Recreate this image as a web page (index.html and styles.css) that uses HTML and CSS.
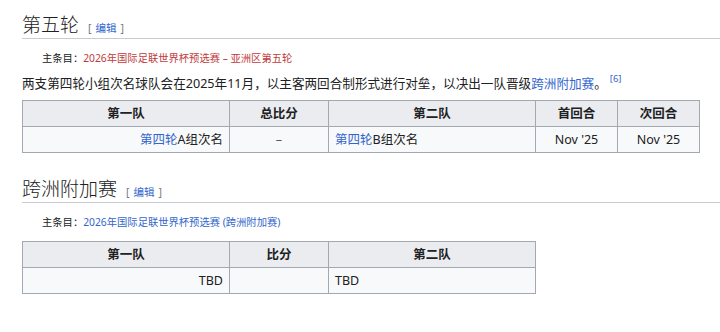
FILE: index.html
```html
<!DOCTYPE html>
<html lang="zh">
<head>
<meta charset="utf-8">
<title>第五轮</title>
<link rel="stylesheet" href="styles.css">
</head>
<body>
<main class="content">
  <h2 class="section-heading first">
    <span class="headline">第五轮</span>
    <span class="editsection"><span class="bracket">[</span><a href="#">编辑</a><span class="bracket">]</span></span>
  </h2>
  <div class="hatnote">主条目：<a href="#" class="new">2026年国际足联世界杯预选赛 – 亚洲区第五轮</a></div>
  <p class="para">两支第四轮小组次名球队会在2025年11月，以主客两回合制形式进行对垒，以决出一队晋级<a href="#">跨洲附加赛</a>。<sup class="ref"><a href="#">[6]</a></sup></p>
  <table class="wikitable wide">
    <colgroup>
      <col class="c-team"><col class="c-agg"><col class="c-team"><col class="c-leg"><col class="c-leg">
    </colgroup>
    <thead>
      <tr><th>第一队</th><th>总比分</th><th>第二队</th><th>首回合</th><th>次回合</th></tr>
    </thead>
    <tbody>
      <tr>
        <td class="right"><a href="#">第四轮</a>A组次名</td>
        <td class="center dash">–</td>
        <td class="left"><a href="#">第四轮</a>B组次名</td>
        <td class="center">Nov '25</td>
        <td class="center">Nov '25</td>
      </tr>
    </tbody>
  </table>

  <h2 class="section-heading second">
    <span class="headline">跨洲附加赛</span>
    <span class="editsection"><span class="bracket">[</span><a href="#">编辑</a><span class="bracket">]</span></span>
  </h2>
  <div class="hatnote">主条目：<a href="#">2026年国际足联世界杯预选赛 (跨洲附加赛)</a></div>
  <table class="wikitable narrow">
    <colgroup>
      <col class="c-team"><col class="c-agg"><col class="c-team">
    </colgroup>
    <thead>
      <tr><th>第一队</th><th>比分</th><th>第二队</th></tr>
    </thead>
    <tbody>
      <tr>
        <td class="right">TBD</td>
        <td class="center"></td>
        <td class="left">TBD</td>
      </tr>
    </tbody>
  </table>
</main>
</body>
</html>
```
FILE: styles.css
```css
html, body {
  margin: 0;
  padding: 0;
  background: #ffffff;
}

body {
  font-family: "Noto Sans", "Noto Sans CJK SC", sans-serif;
  color: #202122;
  overflow: hidden;
}

.content {
  padding-left: 22px;
}

a {
  color: #3366cc;
  text-decoration: none;
}

a.new {
  color: #c03b3b;
}

/* section headings with a thin rule underneath */
.section-heading {
  display: flex;
  align-items: baseline;
  height: 25px;
  margin: 0;
  padding: 0 0 2px 0;
  border-bottom: 1px solid #c8ccd1;
  font-weight: normal;
  white-space: nowrap;
}

.section-heading.first {
  margin-top: 11px;
}

.section-heading.second {
  margin-top: 22px;
}

.headline {
  font-family: "Noto Sans CJK SC", sans-serif;
  font-size: 19px;
  line-height: 25px;
  font-weight: 300;
  color: #202122;
}

.editsection {
  font-family: "Noto Sans", "Noto Sans CJK SC", sans-serif;
  font-size: 10.5px;
  line-height: 12px;
  margin-left: 9px;
}

.editsection .bracket {
  color: #72777d;
}

.editsection .bracket:first-child {
  margin-right: 4px;
}

.editsection .bracket:last-child {
  margin-left: 4px;
}

/* "main article" note */
.hatnote {
  padding-left: 20px;
  margin-top: 11px;
  font-size: 10.3px;
  line-height: 16px;
  color: #202122;
}

.para {
  margin: 8px 0 0 0;
  font-size: 12.6px;
  line-height: 20px;
}

.ref {
  font-size: 9.5px;
  line-height: 1;
  vertical-align: 6px;
  margin-left: 3px;
}

/* data tables */
.wikitable {
  border-collapse: collapse;
  table-layout: fixed;
  background: #f8f9fa;
  border: 1px solid #a2a9b1;
  font-size: 12.5px;
}

.wikitable.wide {
  width: 677px;
  margin-top: 6px;
}

.wikitable.narrow {
  width: 513px;
  margin-top: 11px;
}

.c-team { width: 207px; }
.c-agg { width: 99px; }
.c-leg { width: 82px; }

.wikitable th,
.wikitable td {
  border: 1px solid #a2a9b1;
  padding: 3px 6px;
  line-height: 19px;
  height: 19px;
  white-space: nowrap;
}

.wikitable th {
  background: #eaecf0;
  font-weight: bold;
  text-align: center;
}

.wikitable td.right { text-align: right; }
.wikitable td.center { text-align: center; }
.wikitable td.left { text-align: left; }
.wikitable td.dash { color: #54595d; }
```
